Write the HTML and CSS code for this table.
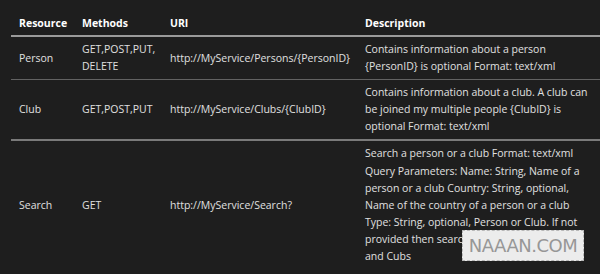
FILE: index.html
```
<!doctype html>
<html lang="en">
<head>
    <meta charset="UTF-8">
    <title>REST resources</title>
    <link rel="stylesheet" href="styles.css">
</head>
<body>

<table class="api">
    <thead>
        <tr>
            <th class="col-res">Resource</th>
            <th class="col-met">Methods</th>
            <th class="col-uri">URI</th>
            <th class="col-desc">Description</th>
        </tr>
    </thead>
    <tbody>
        <tr class="row-thin">
            <td>Person</td>
            <td>GET,POST,PUT,<br>DELETE</td>
            <td>http://MyService/Persons/{PersonID}</td>
            <td>Contains information about a person {PersonID} is optional Format: text/xml</td>
        </tr>
        <tr class="row-thick">
            <td>Club</td>
            <td>GET,POST,PUT</td>
            <td>http://MyService/Clubs/{ClubID}</td>
            <td>Contains information about a club. A club can be joined my multiple people {ClubID} is optional Format: text/xml</td>
        </tr>
        <tr>
            <td>Search</td>
            <td>GET</td>
            <td>http://MyService/Search?</td>
            <td>Search a person or a club Format: text/xml Query Parameters: Name: String, Name of a person or a club Country: String, optional, Name of the country of a person or a club Type: String, optional, Person or Club. If not provided then search for both Person<br>and Cubs</td>
        </tr>
    </tbody>
</table>

<div class="stamp">NAAAN.COM</div>

</body>
</html>
```

FILE: styles.css
```
*{
    padding: 0;
    margin: 0;
    box-sizing: border-box;
}

body{
    background: #1e1e1e;
    color: #e0e0e0;
    font-family: 'Open Sans', sans-serif;
    font-size: 10.5px;
    height: 274px;
    overflow: hidden;
    position: relative;
}

.api{
    margin-left: 11px;
    width: 589px;
    border-collapse: collapse;
    table-layout: fixed;
}

.api th{
    color: #ffffff;
    font-weight: bold;
    text-align: left;
    padding: 16px 8px 5px;
    line-height: 14px;
    border-bottom: 2px solid #9a9a9a;
}

.api td{
    padding: 4px 8px;
    line-height: 17.1px;
    vertical-align: middle;
}

.col-res{ width: 63px; }
.col-met{ width: 88px; }
.col-uri{ width: 195px; }

.row-thin td{
    border-bottom: 1px solid #626262;
}

.row-thick td{
    border-bottom: 2px solid #7a7a7a;
}

.stamp{
    position: absolute;
    left: 462px;
    top: 230px;
    width: 122px;
    height: 31px;
    background: #ececec;
    border: 1px dashed #b8b8b8;
    color: #979797;
    font-family: 'DejaVu Sans', sans-serif;
    font-size: 18px;
    line-height: 29px;
    letter-spacing: -0.5px;
    text-align: center;
}
```
